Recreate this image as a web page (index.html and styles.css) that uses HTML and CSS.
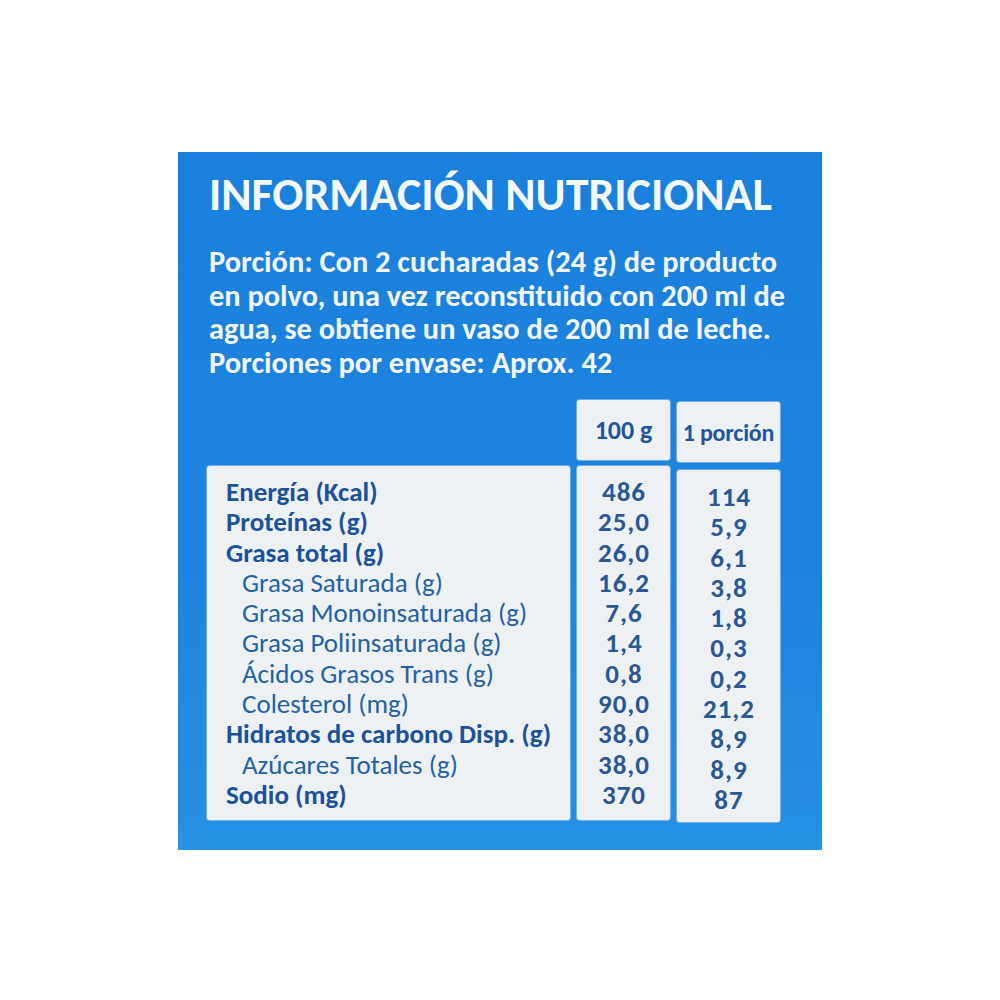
FILE: index.html
```html
<!DOCTYPE html>
<html lang="es">
<head>
<meta charset="utf-8">
<title>Información nutricional</title>
<link rel="stylesheet" href="styles.css">
</head>
<body>
<div class="panel">
  <h1 class="title">INFORMACIÓN NUTRICIONAL</h1>
  <p class="serving">Porción: Con 2 cucharadas (24 g) de producto<br>en polvo, una vez reconstituido con 200 ml de<br>agua, se obtiene un vaso de 200 ml de leche.<br>Porciones por envase: Aprox. 42</p>
  <div class="table">
    <div class="spacer"></div>
    <div class="head">100 g</div>
    <div class="head head-por">1 porción</div>
    <div class="box labels">
      <div class="row main">Energía (Kcal)</div>
      <div class="row main">Proteínas (g)</div>
      <div class="row main">Grasa total (g)</div>
      <div class="row sub">Grasa Saturada (g)</div>
      <div class="row sub">Grasa Monoinsaturada (g)</div>
      <div class="row sub">Grasa Poliinsaturada (g)</div>
      <div class="row sub">Ácidos Grasos Trans (g)</div>
      <div class="row sub">Colesterol (mg)</div>
      <div class="row main">Hidratos de carbono Disp. (g)</div>
      <div class="row sub">Azúcares Totales (g)</div>
      <div class="row main">Sodio (mg)</div>
    </div>
    <div class="box vals">
      <div class="row">486</div>
      <div class="row">25,0</div>
      <div class="row">26,0</div>
      <div class="row">16,2</div>
      <div class="row">7,6</div>
      <div class="row">1,4</div>
      <div class="row">0,8</div>
      <div class="row">90,0</div>
      <div class="row">38,0</div>
      <div class="row">38,0</div>
      <div class="row">370</div>
    </div>
    <div class="box vals vals-por">
      <div class="row">114</div>
      <div class="row">5,9</div>
      <div class="row">6,1</div>
      <div class="row">3,8</div>
      <div class="row">1,8</div>
      <div class="row">0,3</div>
      <div class="row">0,2</div>
      <div class="row">21,2</div>
      <div class="row">8,9</div>
      <div class="row">8,9</div>
      <div class="row">87</div>
    </div>
  </div>
</div>
</body>
</html>
```
FILE: styles.css
```css
html, body {
  margin: 0;
  padding: 0;
  background: #ffffff;
}

body {
  font-family: "Carlito", "Open Sans", "Noto Sans", sans-serif;
}

.panel {
  box-sizing: border-box;
  margin: 152px 0 0 178px;
  width: 644px;
  height: 698px;
  padding: 18px 0 0 31px;
  background: linear-gradient(180deg, #1a80dd 0%, #1d84df 60%, #2690e3 100%);
  color: #ffffff;
}

.title {
  margin: 0;
  font-size: 46px;
  line-height: 48px;
  font-weight: 700;
  color: #f4f8fc;
}

.serving {
  margin: 27px 0 0 0;
  font-size: 30.4px;
  line-height: 33.5px;
  font-weight: 700;
  color: #f2f6fb;
}

.table {
  display: grid;
  grid-template-columns: 363px 93px 103px;
  grid-template-rows: 60px 354px;
  column-gap: 7px;
  row-gap: 6px;
  margin: 21px 0 0 -2px;
  color: #1f5aa0;
}

.head,
.box {
  background: #eef1f4;
  border-radius: 3px;
  box-shadow: 0 0 0 1px rgba(255, 255, 255, 0.35);
}

.head {
  display: flex;
  align-items: center;
  justify-content: center;
  font-weight: 700;
  font-size: 26px;
  color: #21559a;
}

.head-por {
  margin-top: 2px;
  margin-bottom: -2px;
  font-size: 24px;
  letter-spacing: -0.2px;
}

.box {
  box-sizing: border-box;
  padding: 11px 0 0 0;
}

.row {
  height: 30.3px;
  line-height: 30.3px;
  font-size: 27px;
  white-space: nowrap;
}

.labels {
  padding-left: 19px;
}

.main {
  font-weight: 700;
  color: #1b5299;
}

.sub {
  padding-left: 16px;
  font-weight: 400;
  color: #2461a5;
}

.vals {
  text-align: center;
  font-weight: 700;
  color: #2a5893;
}

.vals .row {
  font-size: 27px;
  letter-spacing: 1px;
  padding-left: 1px;
}

.vals-por {
  margin-top: 4px;
  margin-bottom: -2px;
  padding-top: 12px;
}
```
